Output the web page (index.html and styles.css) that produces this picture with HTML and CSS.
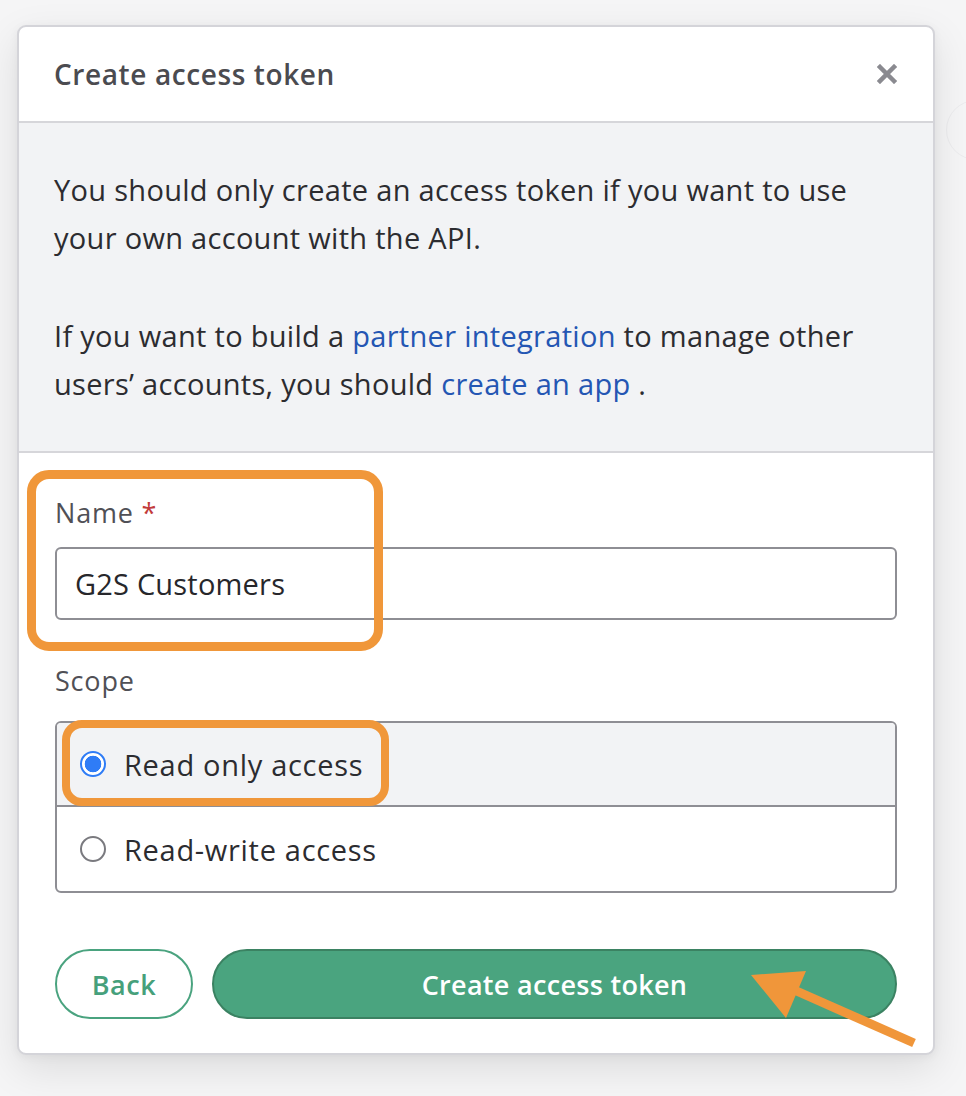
FILE: index.html
```html
<!DOCTYPE html>
<html lang="en">
<head>
<meta charset="utf-8">
<title>Create access token</title>
<link rel="stylesheet" href="styles.css">
</head>
<body>
<div class="page">
  <div class="bg-circle"></div>
  <div class="modal">
    <header class="modal-header">
      <h2 class="modal-title">Create access token</h2>
      <button class="close" aria-label="Close">
        <svg width="20" height="20" viewBox="0 0 20 20"><path d="M3 3 L17 17 M17 3 L3 17" stroke="#8a8a90" stroke-width="4.5" stroke-linecap="square"/></svg>
      </button>
    </header>
    <section class="notice">
      <p>You should only create an access token if you want to use<br>your own account with the API.</p>
      <p>If you want to build a <a href="#">partner integration</a> to manage other<br>users’ accounts, you should <a href="#">create an app</a> .</p>
    </section>
    <div class="form">
      <div class="field">
        <div class="label">Name <span class="req">*</span></div>
        <div class="input">G2S Customers</div>
      </div>
      <div class="field scope-field">
        <div class="label">Scope</div>
        <div class="radio-group">
          <div class="radio-row selected"><span class="radio checked"></span>Read only access</div>
          <div class="radio-row"><span class="radio"></span>Read-write access</div>
        </div>
      </div>
      <div class="actions">
        <button class="btn btn-back">Back</button>
        <button class="btn btn-primary">Create access token</button>
      </div>
    </div>
    <span class="highlight hl-name"></span>
    <span class="highlight hl-scope"></span>
  </div>
  <svg class="arrow" width="966" height="1096" viewBox="0 0 966 1096">
    <line x1="914" y1="1043" x2="792" y2="989" stroke="#f0963a" stroke-width="9"/>
    <polygon points="751,975 806,971 786,1018" fill="#f0963a"/>
  </svg>
</div>
</body>
</html>
```

FILE: styles.css
```css
* { box-sizing: border-box; }
html, body { margin: 0; padding: 0; }
body {
  background: #f5f5f6;
  font-family: "Open Sans", Lato, sans-serif;
  color: #2c2c30;
}
.page {
  position: relative;
  width: 966px;
  height: 1096px;
  padding: 25px 0 0 17px;
  overflow: hidden;
}
.bg-circle {
  position: absolute;
  left: 946px;
  top: 100px;
  width: 60px;
  height: 60px;
  border: 1px solid #ececee;
  border-radius: 50%;
}
.modal {
  position: relative;
  width: 918px;
  height: 1030px;
  background: #fff;
  border: 2px solid #d4d4d9;
  border-radius: 9px;
  box-shadow: 0 14px 40px rgba(0,0,0,0.10), 0 2px 10px rgba(0,0,0,0.05);
}
.modal-header {
  height: 96px;
  display: flex;
  align-items: center;
  justify-content: space-between;
  padding: 0 36px 0 35px;
  border-bottom: 2px solid #d6d6da;
}
.modal-title {
  margin: 0;
  font-size: 28px;
  font-weight: 600;
  color: #4b4b50;
  letter-spacing: 0.6px;
}
.close {
  border: 0;
  background: none;
  padding: 0;
  width: 20px;
  height: 20px;
  display: flex;
}
.notice {
  background: #f2f3f5;
  border-bottom: 2px solid #d6d6da;
  padding: 43px 36px 43px 35px;
  font-size: 29px;
  line-height: 48px;
  letter-spacing: 0.3px;
  color: #2c2c30;
}
.notice p { margin: 0; }
.notice p + p { margin-top: 50px; }
.notice a { color: #2456b3; text-decoration: none; }
.form {
  padding: 44px 36px 0 36px;
}
.label {
  font-size: 27px;
  line-height: 32px;
  color: #505056;
  letter-spacing: 0.8px;
}
.req { color: #c23b3b; }
.field .label { margin-bottom: 18px; }
.input {
  height: 73px;
  border: 2px solid #8e8e94;
  border-radius: 6px;
  padding: 0 18px;
  display: flex;
  align-items: center;
  font-size: 29px;
  letter-spacing: 0.2px;
  color: #27272b;
}
.scope-field { margin-top: 45px; }
.scope-field .label { margin-bottom: 24px; }
.radio-group {
  border: 2px solid #8e8e94;
  border-radius: 6px;
  overflow: hidden;
}
.radio-row {
  height: 84px;
  display: flex;
  align-items: center;
  padding-left: 23px;
  font-size: 29px;
  letter-spacing: 0.7px;
  color: #2c2c30;
}
.radio-row.selected {
  background: #f2f3f5;
  border-bottom: 2px solid #8e8e94;
}
.radio {
  width: 26px;
  height: 26px;
  border-radius: 50%;
  border: 2px solid #7a7a7f;
  background: #fff;
  margin-right: 18px;
  flex: none;
}
.radio.checked {
  border-color: #2f7cf6;
  background: radial-gradient(circle, #2f7cf6 0 8px, #fff 8.6px);
}
.actions {
  display: flex;
  gap: 19px;
  margin-top: 56px;
}
.btn {
  height: 70px;
  border-radius: 35px;
  font-family: inherit;
  font-size: 27px;
  font-weight: 600;
  letter-spacing: 0.3px;
}
.btn-back {
  width: 138px;
  background: #fff;
  border: 2px solid #4aa37f;
  color: #46a07b;
  letter-spacing: 0.6px;
}
.btn-primary {
  flex: 1;
  background: #4aa47f;
  border: 2px solid #3b8262;
  color: #fff;
}
.highlight {
  position: absolute;
  border: 9px solid #f0973a;
  border-radius: 22px;
  pointer-events: none;
}
.hl-name {
  left: 8px;
  top: 443px;
  width: 356px;
  height: 181px;
}
.hl-scope {
  left: 43px;
  top: 693px;
  width: 327px;
  height: 86px;
  border-width: 8px;
  border-radius: 20px;
}
.arrow {
  position: absolute;
  left: 0;
  top: 0;
  pointer-events: none;
}
```
